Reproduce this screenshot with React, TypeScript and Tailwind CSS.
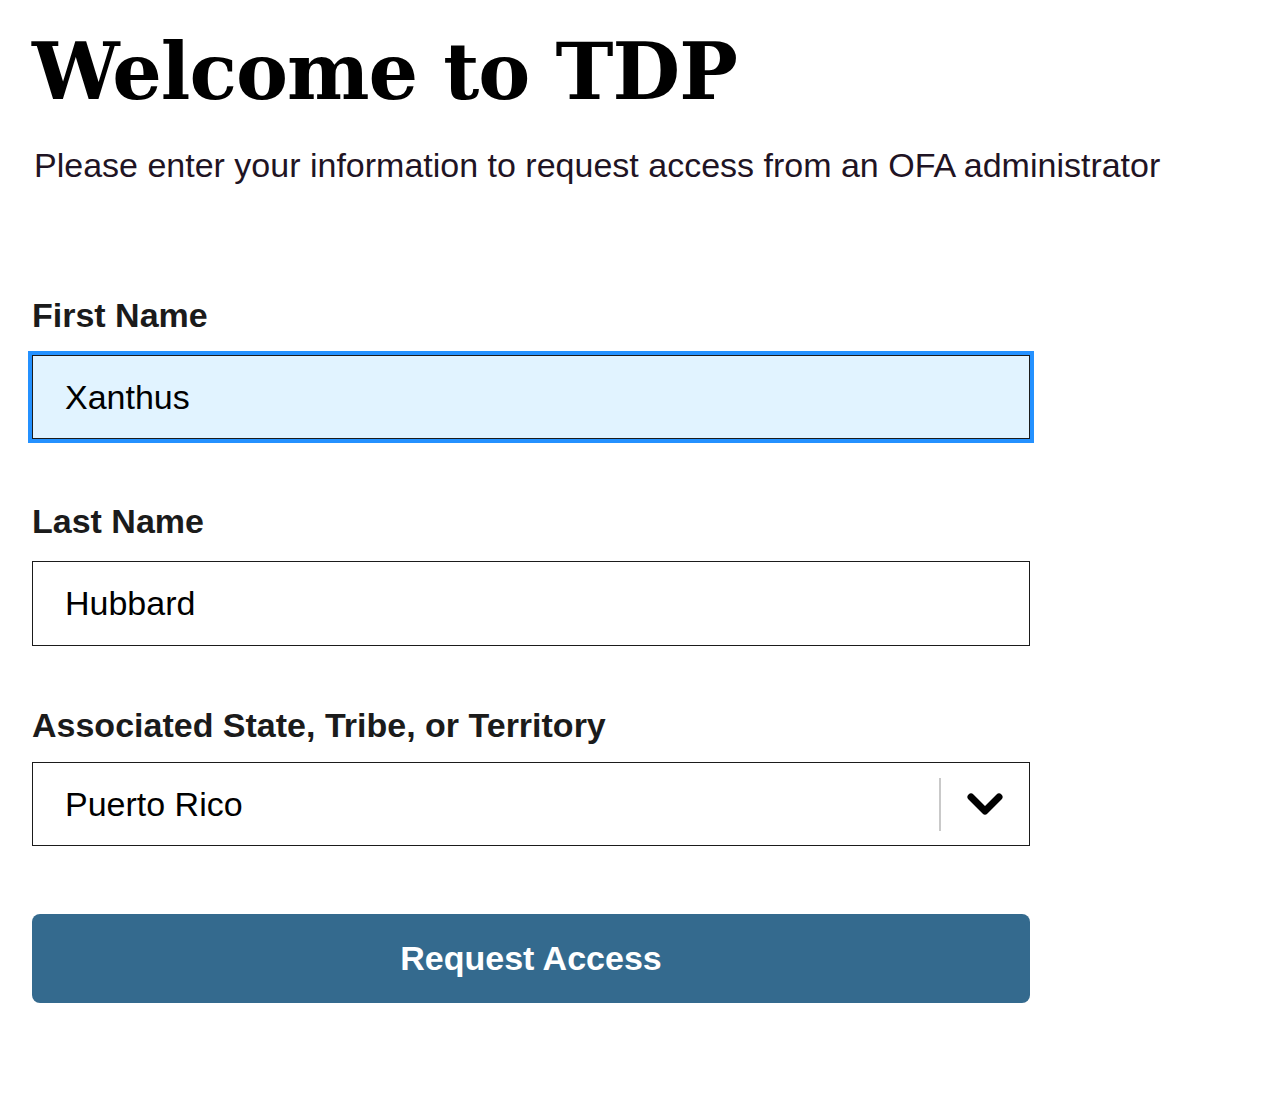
export default function App () {
    return (
        <main className='min-h-screen bg-white px-8 pt-6 font-["Liberation_Sans",Arial,sans-serif]'>
            <h1 className='font-["DejaVu_Serif",Georgia,serif] text-[78px] font-bold leading-[96px] tracking-[-1px] text-black'>Welcome to TDP</h1>
            <p className='mt-[25px] pl-[2px] text-[34px] leading-[40px] text-[#1f1424]'>
                Please enter your information to request access from an OFA administrator
            </p>
            <form className='mt-[112px] w-[998px]' onSubmit={(e) => e.preventDefault()}>
                <label className='block text-[34px] font-bold leading-[36px] text-[#1b1b1b]' htmlFor='first'>First Name</label>
                <input
                    id='first'
                    defaultValue='Xanthus'
                    className='mt-[22px] block h-[84px] w-full border-[1.5px] border-[#1b1b1b] bg-[#e1f3ff] px-8 text-[34px] text-black outline-4 outline-[#2491ff]'
                />

                <label className='mt-[64px] block text-[34px] font-bold leading-[36px] text-[#1b1b1b]' htmlFor='last'>Last Name</label>
                <input
                    id='last'
                    defaultValue='Hubbard'
                    className='mt-[22px] block h-[85px] w-full border-[1.5px] border-[#1b1b1b] bg-white px-8 text-[34px] text-black outline-none'
                />

                <label className='mt-[61px] block text-[34px] font-bold leading-[36px] text-[#1b1b1b]' htmlFor='stt'>Associated State, Tribe, or Territory</label>
                <div className='mt-[19px] flex h-[84px] items-center border-[1.5px] border-[#1b1b1b] bg-white'>
                    <span id='stt' className='flex-1 pl-8 text-[34px] text-black'>Puerto Rico</span>
                    <span className='h-[53px] w-[2px] bg-[#c9c9c9]' />
                    <span className='flex w-[88px] items-center justify-center'>
                        <svg width='38' height='26' viewBox='0 0 38 26'>
                            <path d='M5 6 L19 20 L33 6' fill='none' stroke='#000' strokeWidth='7' strokeLinecap='round' strokeLinejoin='round' />
                        </svg>
                    </span>
                </div>

                <button
                    type='submit'
                    className='mt-[68px] flex h-[89px] w-full items-center justify-center rounded-lg bg-[#346a8e] text-[34px] font-bold text-white'
                >
                    Request Access
                </button>
            </form>
        </main>
    )
}
